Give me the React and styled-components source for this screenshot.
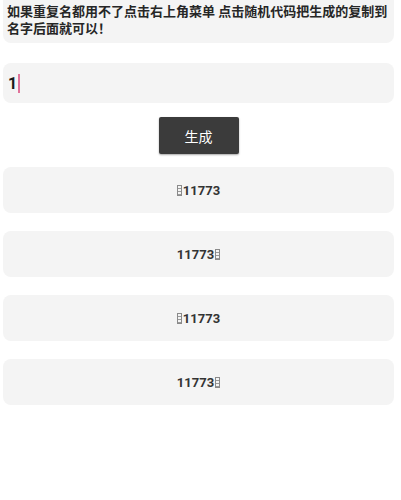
import React from "react";
import styled, { createGlobalStyle } from "styled-components";

const Global = createGlobalStyle`
  html, body { margin: 0; padding: 0; background: #ffffff; }
  body { font-family: Roboto, "Noto Sans CJK SC", sans-serif; }
`;

const Page = styled.div`
  width: 401px;
  height: 500px;
  box-sizing: border-box;
  padding: 0 7px 0 3px;
  display: flex;
  flex-direction: column;
  background: #fff;
`;

const Notice = styled.div`
  background: #f4f4f4;
  border-radius: 0 0 8px 8px;
  padding: 4px 4px 8px 4px;
  font-size: 13px;
  line-height: 16.5px;
  font-weight: 700;
  color: #262626;
  height: 43px;
  box-sizing: border-box;
`;

const InputBox = styled.div`
  margin-top: 20px;
  height: 40px;
  background: #f4f4f4;
  border-radius: 8px;
  display: flex;
  align-items: center;
  padding-left: 5px;
  font-size: 16px;
  font-weight: 700;
  color: #1a1a1a;
`;

const Caret = styled.span`
  display: inline-block;
  width: 1.5px;
  height: 19px;
  margin-left: 1px;
  background: #e0739a;
`;

const ButtonRow = styled.div`
  margin-top: 14px;
  display: flex;
  justify-content: center;
`;

const Button = styled.button`
  width: 80px;
  height: 37px;
  border: none;
  border-radius: 2px;
  background: #3b3b3b;
  color: #ffffff;
  font-family: Roboto, "Noto Sans CJK SC", sans-serif;
  font-size: 14px;
  box-shadow: 0 1px 2px rgba(0, 0, 0, 0.35);
  padding: 0;
`;

const List = styled.div`
  margin-top: 13px;
  display: flex;
  flex-direction: column;
  gap: 18px;
`;

const Card = styled.div`
  height: 46px;
  background: #f4f4f4;
  border-radius: 8px;
  display: flex;
  align-items: center;
  justify-content: center;
  font-size: 13px;
  font-weight: 700;
  color: #333333;
`;

const Tofu = styled.span`
  display: inline-block;
  width: 3px;
  height: 9px;
  border: 0.5px solid #8a8a8a;
  background: repeating-linear-gradient(
    to bottom,
    #f4f4f4 0px,
    #f4f4f4 2px,
    #9a9a9a 2px,
    #9a9a9a 3px
  );
  margin: 0 0.5px;
  vertical-align: -0.5px;
`;

const codes = ["pre", "post", "pre", "post"];

export default function App() {
  return (
    <>
      <Global />
      <Page>
        <Notice>
          如果重复名都用不了点击右上角菜单 点击随机代码把生成的复制到名字后面就可以！
        </Notice>
        <InputBox>
          1<Caret />
        </InputBox>
        <ButtonRow>
          <Button>生成</Button>
        </ButtonRow>
        <List>
          {codes.map((c, i) => (
            <Card key={i}>
              {c === "pre" && <Tofu />}
              11773
              {c === "post" && <Tofu />}
            </Card>
          ))}
        </List>
      </Page>
    </>
  );
}
